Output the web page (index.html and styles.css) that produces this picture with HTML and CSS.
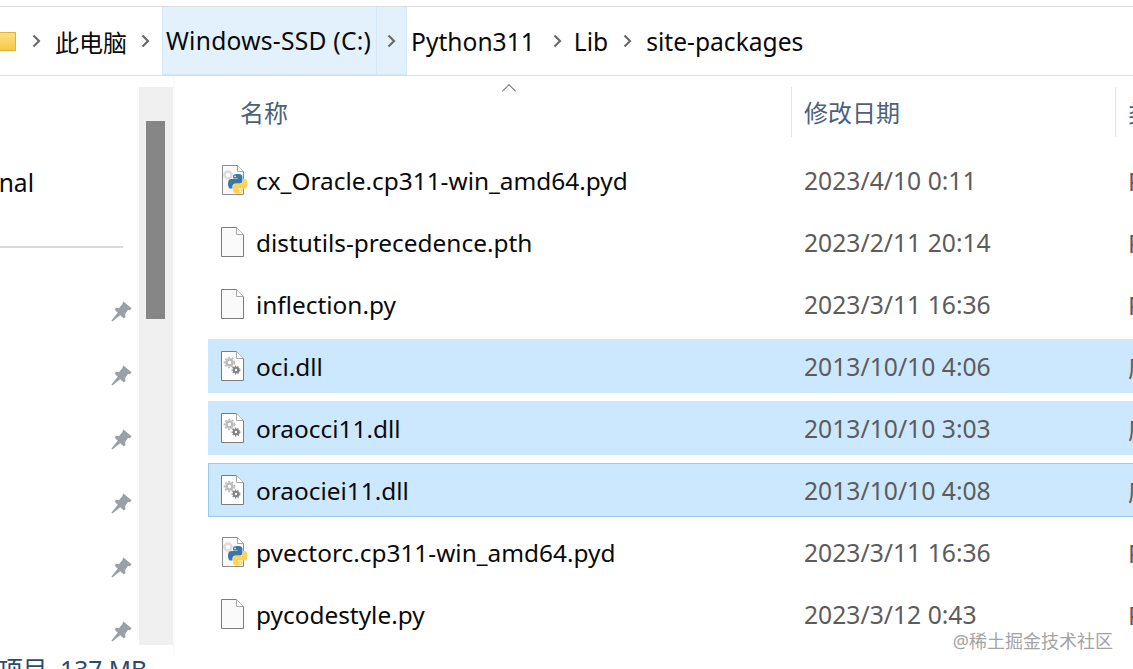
FILE: index.html
```html
<!DOCTYPE html>
<html lang="zh-CN">
<head>
<meta charset="UTF-8">
<title>site-packages</title>
<link rel="stylesheet" href="styles.css">
</head>
<body>
<svg class="defs" width="0" height="0">
  <defs>
    <symbol id="page" viewBox="0 0 23 30">
      <path d="M.5.5h15l7 7v22H.5z" fill="#fafafa" stroke="#7c7c7c"/>
      <path d="M15.5.5v7h7" fill="#fff" stroke="#a8a8a8"/>
    </symbol>
    <symbol id="gears" viewBox="0 0 23 30">
      <path d="M.5.5h15l7 7v22H.5z" fill="#fff" stroke="#7c7c7c"/>
      <path d="M15.5.5v7h7" fill="#fff" stroke="#a8a8a8"/>
      <circle cx="8.500" cy="11.500" r="3" fill="none" stroke="#bcbcbc" stroke-width="2.600"/>
      <circle cx="8.500" cy="11.500" r="5" fill="none" stroke="#bcbcbc" stroke-width="1.600" stroke-dasharray="2 1.600"/>
      <circle cx="15" cy="19" r="2.200" fill="none" stroke="#808080" stroke-width="2"/>
      <circle cx="15" cy="19" r="3.800" fill="none" stroke="#808080" stroke-width="1.200" stroke-dasharray="1.500 1.200"/>
    </symbol>
    <symbol id="python" viewBox="0 0 27 30">
      <path d="M1.500.5h15l6 6v23h-21z" fill="#fafafa" stroke="#8c8c8c"/>
      <path d="M16.500.5v6h6" fill="#fff" stroke="#a8a8a8"/>
      <circle cx="7" cy="10" r="3.500" fill="none" stroke="#dcdcdc" stroke-width="2.500"/>
      <g transform="translate(7 9) scale(.175)">
        <path fill="#3a76a8" d="M54.919 0c-4.584.022-8.961.413-12.812 1.095C30.760 3.099 28.700 7.295 28.700 15.032v10.219h26.813v3.406H18.638c-7.793 0-14.616 4.684-16.750 13.594-2.462 10.213-2.571 16.586 0 27.250 1.905 7.938 6.457 13.594 14.250 13.594h9.218v-12.250c0-8.850 7.657-16.656 16.750-16.656h26.782c7.454 0 13.406-6.138 13.406-13.625V15.032c0-7.266-6.130-12.725-13.406-13.937C64.282.328 59.502-.02 54.918 0zM40.419 8.220c2.770 0 5.031 2.299 5.031 5.125 0 2.816-2.262 5.094-5.031 5.094-2.780 0-5.031-2.278-5.031-5.094 0-2.826 2.252-5.125 5.031-5.125z"/>
        <path fill="#fdd34f" d="M85.638 28.657v11.906c0 9.231-7.826 17-16.750 17H42.106c-7.336 0-13.406 6.278-13.406 13.625v25.531c0 7.266 6.319 11.540 13.406 13.625 8.488 2.496 16.627 2.947 26.782 0 6.750-1.954 13.406-5.888 13.406-13.625V86.500H55.513v-3.405H95.700c7.793 0 10.696-5.436 13.406-13.594 2.800-8.399 2.680-16.476 0-27.250-1.925-7.758-5.604-13.594-13.406-13.594zM70.575 93.313c2.780 0 5.031 2.278 5.031 5.094 0 2.826-2.252 5.125-5.031 5.125-2.770 0-5.031-2.299-5.031-5.125 0-2.816 2.262-5.094 5.031-5.094z"/>
      </g>
    </symbol>
    <symbol id="pin" viewBox="0 0 22 22">
      <path d="M13 .5 21.500 7.500l-1.500 2.200-2.200-.3-3 4.200.4 3.200-1.800 1.500L9.600 15 1.500 21.500.5 20.500 7 12.400 3.800 9 5.300 7.200l3 .4L11.800 3.400z" fill="#9aa0a5"/>
    </symbol>
    <symbol id="chev" viewBox="0 0 9 14">
      <path d="M1.500 1.500 7 7l-5.500 5.500" fill="none" stroke="#6b6b6b" stroke-width="2.200"/>
    </symbol>
  </defs>
</svg>

<div class="crumbs">
  <div class="folder"></div>
  <svg class="chev chev-first"><use href="#chev"/></svg>
  <span class="crumb crumb-pc">此电脑</span>
  <svg class="chev chev-pc"><use href="#chev"/></svg>
  <div class="hot">
    <span class="crumb hot-name">Windows-SSD (C:)</span>
    <div class="hot-arrow"><svg class="chev"><use href="#chev"/></svg></div>
  </div>
  <span class="crumb crumb-py">Python311</span>
  <svg class="chev chev-py"><use href="#chev"/></svg>
  <span class="crumb crumb-lib">Lib</span>
  <svg class="chev chev-lib"><use href="#chev"/></svg>
  <span class="crumb crumb-site">site-packages</span>
</div>

<div class="main">
  <div class="side">
    <div class="nav">
      <div class="nav-label"><span>Personal</span></div>
      <div class="nav-line"></div>
      <div class="pins">
        <svg class="pin"><use href="#pin"/></svg>
        <svg class="pin"><use href="#pin"/></svg>
        <svg class="pin"><use href="#pin"/></svg>
        <svg class="pin"><use href="#pin"/></svg>
        <svg class="pin"><use href="#pin"/></svg>
        <svg class="pin"><use href="#pin"/></svg>
      </div>
    </div>
    <div class="scroll"><div class="thumb"></div></div>
  </div>

  <div class="files">
    <div class="head">
      <div class="col-name">名称<span class="caret"></span></div>
      <div class="col-date">修改日期</div>
      <div class="col-type">类型</div>
    </div>

    <div class="row">
      <svg class="ico ico-py"><use href="#python"/></svg>
      <span class="name">cx_Oracle.cp311-win_amd64.pyd</span>
      <span class="date">2023/4/10 0:11</span>
      <span class="type">PYD 文件</span>
    </div>
    <div class="row">
      <svg class="ico"><use href="#page"/></svg>
      <span class="name">distutils-precedence.pth</span>
      <span class="date">2023/2/11 20:14</span>
      <span class="type">PTH 文件</span>
    </div>
    <div class="row">
      <svg class="ico"><use href="#page"/></svg>
      <span class="name">inflection.py</span>
      <span class="date">2023/3/11 16:36</span>
      <span class="type">PY 文件</span>
    </div>
    <div class="row sel">
      <svg class="ico"><use href="#gears"/></svg>
      <span class="name">oci.dll</span>
      <span class="date">2013/10/10 4:06</span>
      <span class="type">应用程序扩展</span>
    </div>
    <div class="row sel">
      <svg class="ico"><use href="#gears"/></svg>
      <span class="name">oraocci11.dll</span>
      <span class="date">2013/10/10 3:03</span>
      <span class="type">应用程序扩展</span>
    </div>
    <div class="row sel focus">
      <svg class="ico"><use href="#gears"/></svg>
      <span class="name">oraociei11.dll</span>
      <span class="date">2013/10/10 4:08</span>
      <span class="type">应用程序扩展</span>
    </div>
    <div class="row">
      <svg class="ico ico-py"><use href="#python"/></svg>
      <span class="name">pvectorc.cp311-win_amd64.pyd</span>
      <span class="date">2023/3/11 16:36</span>
      <span class="type">PYD 文件</span>
    </div>
    <div class="row">
      <svg class="ico"><use href="#page"/></svg>
      <span class="name">pycodestyle.py</span>
      <span class="date">2023/3/12 0:43</span>
      <span class="type">PY 文件</span>
    </div>
  </div>
</div>

<div class="status"><span>个项目&nbsp; 137 MB</span></div>

<div class="mark">@稀土掘金技术社区</div>
</body>
</html>
```

FILE: styles.css
```css
* {
  padding: 0;
  margin: 0;
  box-sizing: border-box;
}
html, body {
  height: 669px;
  overflow: hidden;
}
body {
  position: relative;
  background-color: white;
  color: #0a0a0a;
  font-family: "Noto Sans", "Noto Sans CJK SC", sans-serif;
  font-size: 24.6px;
}
.defs {
  position: absolute;
}

/* address bar */
.crumbs {
  display: flex;
  align-items: center;
  height: 70px;
  margin-top: 6px;
  border-top: 1px solid #dcdcdc;
  border-bottom: 1px solid #dcdcdc;
  white-space: nowrap;
}
.folder {
  width: 16px;
  height: 19px;
  background: linear-gradient(#fbe08a, #f6c845);
  border: 1px solid #e2b33c;
  border-left: 0;
}
.chev {
  flex: none;
  width: 9px;
  height: 14px;
}
.chev-first { margin-left: 16px; }
.crumb-pc {
  margin-left: 14px;
  font-size: 24px;
}
.chev-pc { margin-left: 14px; }
.hot {
  display: flex;
  align-items: stretch;
  height: 68px;
  margin-left: 12px;
  background-color: #e3f1fc;
  border: 1px solid #d3e8f8;
  border-top: 0;
}
.hot-name {
  display: flex;
  align-items: center;
  width: 213px;
  padding-left: 3px;
  letter-spacing: .25px;
}
.hot-arrow {
  display: flex;
  align-items: center;
  justify-content: center;
  width: 30px;
  border-left: 1px solid #d3e8f8;
}
.crumb-py { margin-left: 4px; }
.chev-py { margin-left: 18px; }
.crumb-lib { margin-left: 12px; }
.chev-lib { margin-left: 15px; }
.crumb-site { margin-left: 14px; }

/* left panel */
.main {
  display: flex;
  height: 579px;
}
.side {
  display: flex;
  flex: none;
  width: 175px;
  border-right: 2px solid #fafafa;
}
.nav {
  width: 139px;
}
.nav-label {
  display: flex;
  justify-content: flex-end;
  width: 34px;
  height: 34px;
  margin-top: 90px;
  overflow: hidden;
  line-height: 34px;
  white-space: nowrap;
}
.nav-line {
  width: 123px;
  height: 2px;
  margin-top: 46px;
  background-color: #d9d9d9;
}
.pins {
  display: flex;
  flex-direction: column;
  align-items: flex-end;
  gap: 43px;
  margin-top: 53px;
  padding-right: 7px;
}
.pin {
  width: 21px;
  height: 21px;
}
.scroll {
  width: 34px;
  height: 558px;
  margin-top: 11px;
  padding: 34px 7px 0;
  background-color: #f0f0f0;
}
.thumb {
  width: 19px;
  height: 198px;
  background-color: #868686;
}

/* file list */
.files {
  flex: none;
  width: 1000px;
  margin-left: 33px;
  padding-top: 11px;
}
.head {
  display: flex;
  height: 50px;
  margin-bottom: 16px;
  color: #4c607a;
  font-size: 24px;
  line-height: 52px;
}
.col-name {
  position: relative;
  width: 583px;
  padding-left: 32px;
}
.col-date {
  width: 324px;
  padding-left: 12px;
  border-left: 1px solid #e3e3e3;
}
.col-type {
  padding-left: 12px;
  border-left: 1px solid #e3e3e3;
}
.caret {
  position: absolute;
  top: -1px;
  left: 296px;
  width: 10px;
  height: 10px;
  border-top: 1px solid #777;
  border-left: 1px solid #777;
  transform: rotate(45deg);
}
.row {
  display: flex;
  align-items: center;
  height: 54px;
  margin-bottom: 8px;
  white-space: nowrap;
}
.sel {
  background-color: #cce8ff;
}
.focus {
  border: 1px solid #99c8ea;
  border-right: 0;
}
.ico {
  flex: none;
  width: 23px;
  height: 30px;
  margin: 0 12px 0 13px;
}
.ico-py {
  width: 27px;
  margin-right: 8px;
}
.focus .ico {
  margin-left: 12px;
}
.name {
  flex: none;
  width: 548px;
  font-size: 24.4px;
}
.date {
  flex: none;
  width: 324px;
  color: #5c5c5c;
  font-size: 24.7px;
}
.type {
  flex: none;
  color: #5c5c5c;
}

/* bottom */
.status {
  display: flex;
  justify-content: flex-end;
  width: 147px;
  overflow: hidden;
  color: #2c4a6e;
  line-height: 30px;
  white-space: nowrap;
}
.mark {
  position: absolute;
  right: 20px;
  bottom: 17px;
  color: #a3a3a3;
  font-size: 18px;
  line-height: 22px;
  text-shadow: 0 0 2px white;
}
```
